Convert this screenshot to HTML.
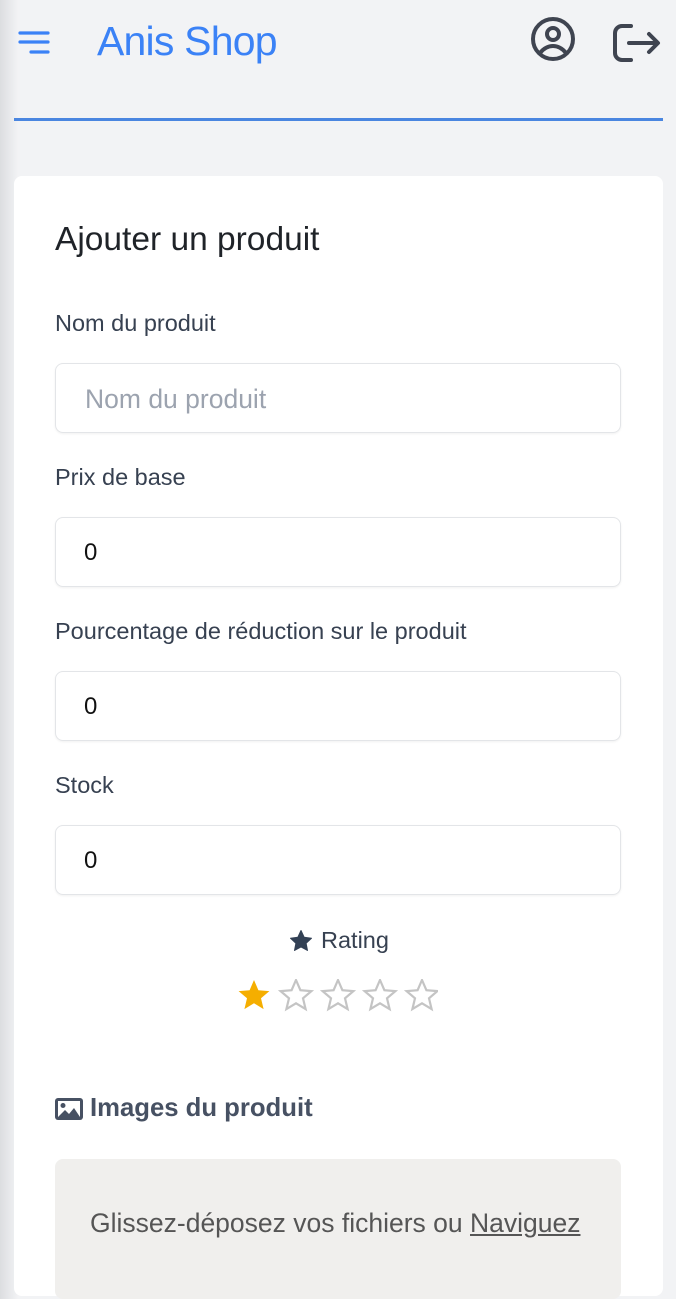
<!DOCTYPE html>
<html><head><meta charset="utf-8"><style>
*{box-sizing:border-box;margin:0;padding:0}
body{width:676px;height:1280px;overflow:hidden;background:linear-gradient(90deg,#dcdde0 0,#f2f3f5 18px,#f2f3f5 100%);font-family:"Liberation Sans",Roboto,sans-serif;position:relative;color:#1f2937}
.hdr{position:absolute;left:14px;right:13px;top:118px;height:3px;background:#4a86e0}
.logo{position:absolute;left:97px;top:18px;font-size:41px;color:#3b82f6;letter-spacing:-0.8px}
.card{position:absolute;left:14px;top:176px;width:649px;height:1120px;background:#fff;border-radius:8px}
.t{position:absolute;left:55px;font-size:23.5px;color:#374151;white-space:nowrap}
.in{position:absolute;left:55px;width:566px;height:70px;border:1px solid #e3e5e8;border-radius:8px;box-shadow:0 1px 2px rgba(0,0,0,.06);font-size:24px;padding:21px 28px;color:#111}
</style></head><body>
<svg style="position:absolute;left:18px;top:30px" width="34" height="26" viewBox="0 0 34 26"><g stroke="#3b82f6" stroke-width="3.2" stroke-linecap="round"><line x1="2" y1="3" x2="30" y2="3"/><line x1="2" y1="12" x2="30" y2="12"/><line x1="13" y1="22" x2="30" y2="22"/></g></svg>
<div class="logo">Anis Shop</div>
<svg style="position:absolute;left:529px;top:16px" width="48" height="48" viewBox="0 0 48 48" fill="none" stroke="#3f4450" stroke-width="4"><circle cx="24" cy="23" r="20"/><circle cx="24" cy="18" r="6"/><path d="M11 37c4-5 9-7 13-7s9 2 13 7"/></svg>
<svg style="position:absolute;left:611px;top:22px" width="50" height="44" viewBox="0 0 50 44" fill="none" stroke="#3f4450" stroke-width="4" stroke-linecap="round" stroke-linejoin="round"><path d="M20 4h-9a7 7 0 0 0-7 7v20a7 7 0 0 0 7 7h9"/><path d="M18 21h28M38 12l9 9-9 9"/></svg>
<div class="hdr"></div>
<div class="card"></div>
<div class="t" style="top:221px;font-size:33.5px;color:#1f2328">Ajouter un produit</div>
<div class="t" style="top:310px">Nom du produit</div>
<div class="in" style="top:363px;color:#9ca3af;padding-left:29px;font-size:26.5px;padding-top:20px">Nom du produit</div>
<div class="t" style="top:464px">Prix de base</div>
<div class="in" style="top:517px">0</div>
<div class="t" style="top:618px">Pourcentage de réduction sur le produit</div>
<div class="in" style="top:671px">0</div>
<div class="t" style="top:772px">Stock</div>
<div class="in" style="top:825px">0</div>
<svg style="position:absolute;left:288px;top:929px" width="26" height="24" viewBox="0 0 24 24"><path d="M12 1.5l3.2 6.8 7.3.9-5.4 5 1.4 7.3L12 17.9l-6.5 3.6 1.4-7.3-5.4-5 7.3-.9z" fill="#334155" stroke="#334155" stroke-linejoin="round"/></svg>
<div class="t" style="top:927px;left:321px;font-size:23.5px">Rating</div>
<svg style="position:absolute;left:238px;top:979px" width="200" height="34" viewBox="0 0 200 34">
<defs><path id="s" d="M16 1l4.4 10.2 11 .9-8.4 7.2 2.6 10.8L16 24.3 6.4 30.1 9 19.3.6 12.1l11-.9z"/></defs>
<use href="#s" fill="#f5ae00"/>
<g fill="none" stroke="#c4c4c4" stroke-width="2.2"><use href="#s" x="42"/><use href="#s" x="84"/><use href="#s" x="126"/><use href="#s" x="168"/></g></svg>
<svg style="position:absolute;left:55px;top:1098px" width="28" height="22" viewBox="0 0 28 22"><rect x="0" y="0" width="28" height="22" rx="3" fill="#475163"/><rect x="3" y="3" width="22" height="16" fill="#fff"/><circle cx="8" cy="7.5" r="2.5" fill="#475163"/><path d="M3 19l7-7 4 4 5-6 6 9z" fill="#475163"/></svg>
<div class="t" style="top:1094px;left:90px;font-size:25.7px;font-weight:bold;color:#475163">Images du produit</div>
<div style="position:absolute;left:55px;top:1159px;width:566px;height:140px;background:#f0efed;border-radius:8px"></div>
<div class="t" style="top:1208px;left:90px;font-size:26.5px;color:#555">Glissez-déposez vos fichiers ou <span style="text-decoration:underline">Naviguez</span></div>
</body></html>
